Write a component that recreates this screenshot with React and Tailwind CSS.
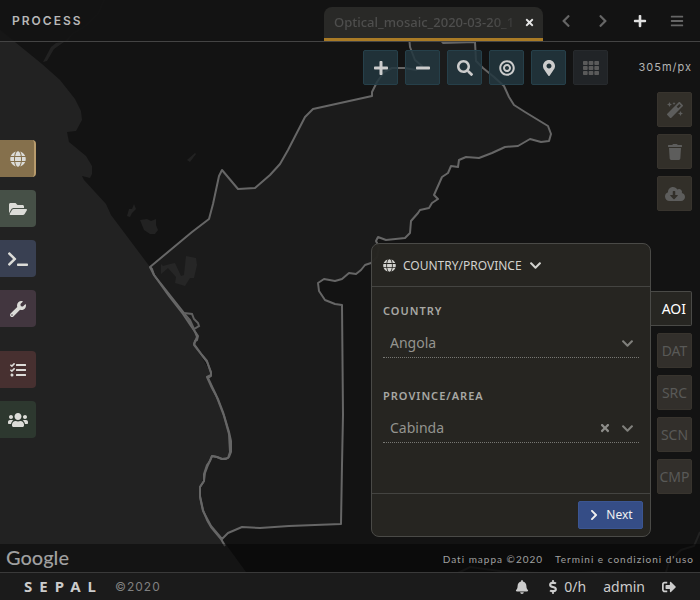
import React from "react";
import {
  FaBars, FaBell, FaBullseye, FaChevronDown, FaChevronLeft, FaChevronRight,
  FaCloudDownloadAlt, FaDollarSign, FaFolderOpen, FaGlobe, FaMagic,
  FaMapMarkerAlt, FaMinus, FaPlus, FaSearch, FaSignOutAlt, FaTasks,
  FaTerminal, FaTh, FaTimes, FaTrash, FaUsers, FaWrench,
} from "react-icons/fa";

const PROVINCE =
  "M409 36 L410 47 L415 60 L422 66 L416 70 L405 68 L392 68 L384 72 L377 82 L372 92 L372 96 L313 109 L305 117 L288 150 L280 164 L270 175 L255 188 L238 189 L222 170 L219 176 L213 204 L209 219 L192 232 L150 267 L154 275 L188 318 L195 332 L197 337 L194 344 L202 355 L207 361 L211 373 L211 376 L208 378 L216 395 L224 416 L229 434 L230 452 L228 458 L222 459 L217 457 L212 456 L208 465 L205 473 L204 481 L200 487 L200 497 L203 511 L211 526 L222 539 L228 533 L242 527 L260 528 L289 526 L341 524 L342 465 L343 415 L342 305 L335 304 L325 300 L319 291 L318 283 L324 279 L335 281 L342 279 L349 273 L356 274 L361 270 L365 265 L371 263 L377 257 L379 247 L376 241 L378 237 L386 240 L405 238 L410 233 L411 221 L418 213 L420 210 L429 208 L432 203 L438 199 L434 195 L442 177 L448 173 L451 166 L458 167 L459 160 L466 157 L479 158 L492 153 L505 147 L518 146 L530 139 L541 142 L549 141 L551 134 L548 126 L525 112 L514 105 L509 97 L504 86 L494 77 L483 68 L476 61 L475 42 L443 43 L439 38";

const SHORELINE =
  "M150 267 L152 269 L154 275 L169 296 L183 314 L191 326 L196 333 L198 336 L197 340 L195 341 L194 345 L201 354 L207 362 L211 372 L211 375 L207 377 L212 388 L218 399 L223 412 L229 432 L231 441 L231 452 L229 457 L226 459 L222 459 L217 457 L212 456 L210 461 L207 465 L204 474 L204 481 L200 487 L200 496 L203 510 L207 520 L211 527 L221 539 L225 546";

const COAST =
  "M0 30 L15 42 L42 64 L60 80 L75 99 L81 111 L82 120 L76 131 L67 132 L69 142 L86 156 L92 166 L92 174 L90 178 L82 176 L84 180 L106 204 L111 215 L150 267 L188 318 L196 337 L194 344 L211 373 L208 378 L216 395 L229 434 L230 455 L222 459 L212 456 L200 487 L203 511 L222 539 L246 572 L246 900 L0 900 Z";

function MapCanvas() {
  return (
    <svg
      className="absolute inset-0 h-full w-full"
      viewBox="0 0 700 600"
      preserveAspectRatio="xMinYMin slice"
      aria-hidden="true"
    >
      <rect width="1400" height="1200" fill="#131313" />
      <path d={COAST} fill="#222222" />
      <path d={PROVINCE} fill="#1b1b1b" stroke="#666666" strokeWidth="2" strokeLinejoin="round" />
      <path d={SHORELINE} fill="none" stroke="#666666" strokeWidth="2" strokeLinejoin="round" />
      <path d="M184 313 L192 314 L194 319 L198 323 L199 326 L194 329 L190 320 L186 316" fill="none" stroke="#606060" strokeWidth="2" />
      <g fill="#222222">
        <path d="M140 220 L147 219 L151 221 L156 219 L156 225 L158 230 L155 234 L150 234 L144 230 Z" />
        <path d="M127 216 L129 209 L132 209 L134 204 L136 209 L132 213 L130 217 Z" />
        <path d="M187 160 L195 153 L196 154 L190 162 Z" />
        <path d="M43 62 L51 47 L56 43 L68 41 L72 34 L64 42 L54 49 L47 61 Z" />
      </g>
      <path
        d="M186 256 L196 258 L197 265 L194 278 L190 278 L185 286 L175 283 L176 277 L168 268 L161 274 L161 264 L163 266 L170 264 L175 263 L181 276 L184 275 Z"
        fill="#262626"
      />
      <path
        d="M456 574 L470 567 L500 571 L560 574 L600 572 L658 574 M666 572 L669 562 L681 550 L694 546 L700 532"
        fill="none"
        stroke="#222222"
        strokeWidth="2"
      />
      <path d="M72 34 L84 27 L98 14 L104 0" fill="none" stroke="#191919" strokeWidth="1" />
    </svg>
  );
}

const modules = [
  [
    { label: "Process", icon: FaGlobe, size: 16, style: "bg-[#85704c] border-r-2 border-[#b89b6c] pl-[2px]" },
    { label: "Browse", icon: FaFolderOpen, size: 18, style: "bg-[#465047]" },
    { label: "Terminal", icon: FaTerminal, size: 20, style: "bg-[#394052]" },
    { label: "Apps", icon: FaWrench, size: 16, style: "bg-[#42363f]" },
  ],
  [
    { label: "Tasks", icon: FaTasks, size: 16, style: "bg-[#473030]" },
    { label: "Users", icon: FaUsers, size: 20, style: "bg-[#2d382f]" },
  ],
];

const mapTools = [
  { label: "Zoom in", icon: FaPlus },
  { label: "Zoom out", icon: FaMinus },
  { label: "Search", icon: FaSearch },
  { label: "Fit bounds", icon: FaBullseye },
  { label: "Area of interest", icon: FaMapMarkerAlt },
];

const recipeTools = [
  { label: "Auto-select scenes", icon: FaMagic, size: 16 },
  { label: "Clear selected scenes", icon: FaTrash, size: 16 },
  { label: "Retrieve", icon: FaCloudDownloadAlt, size: 20 },
];

function ModuleMenu() {
  return (
    <nav className="flex w-9 flex-col gap-6 pt-[98px]">
      {modules.map((group, i) => (
        <div key={i} className="flex flex-col gap-[13px]">
          {group.map(({ label, icon: Icon, size, style }) => (
            <button
              key={label}
              aria-label={label}
              className={`flex h-[37px] w-9 items-center justify-center rounded-r text-[#dcdcd8] ${style}`}
            >
              <Icon size={size} />
            </button>
          ))}
        </div>
      ))}
    </nav>
  );
}

function Header() {
  return (
    <header className="flex h-[42px] shrink-0 items-end justify-between border-b border-[#444444] bg-[#141414]/85">
      <h1 className="self-center pl-3 font-[Inter,sans-serif] text-xs font-semibold tracking-[2px] text-[#b8b8b8]">
        PROCESS
      </h1>
      <div className="flex h-full items-end">
        <div className="flex h-[34px] w-[219px] items-center rounded-t-lg border-b-3 border-[#a97b26] bg-[#292927] pr-2 pl-[10px]">
          <span className="min-w-0 flex-1 text-[13px] font-medium whitespace-nowrap text-[#4e4e4d] [mask-image:linear-gradient(to_right,black_85%,transparent_110%)]">
            Optical_mosaic_2020-03-20_1
          </span>
          <button aria-label="Close tab" className="ml-2 text-[#e6e6e6]">
            <FaTimes size={11} />
          </button>
        </div>
        <div className="flex h-full items-center gap-[23px] px-4 pr-4 text-[#666666]">
          <button aria-label="Previous tab"><FaChevronLeft size={14} /></button>
          <button aria-label="Next tab"><FaChevronRight size={14} /></button>
          <button aria-label="Add tab" className="text-[#e0e0e0]"><FaPlus size={14} /></button>
          <button aria-label="Tab menu"><FaBars size={14} /></button>
        </div>
      </div>
    </header>
  );
}

function MapToolbar() {
  return (
    <div className="flex items-center justify-end gap-[7px] pt-2">
      {mapTools.map(({ label, icon: Icon }) => (
        <button
          key={label}
          aria-label={label}
          className="flex h-[35px] w-[35px] items-center justify-center rounded-xs border border-[#26404a] bg-[#23373f]/85 text-[#cccccc]"
        >
          <Icon size={16} />
        </button>
      ))}
      <button
        aria-label="Grid"
        disabled
        className="flex h-[35px] w-[35px] items-center justify-center rounded-xs border border-[#272a2d] bg-[#212427] text-[#5a5a5a]"
      >
        <FaTh size={16} />
      </button>
      <span className="w-[77px] text-right font-[Inter,sans-serif] text-[11px] tracking-[1px] text-[#b4b4b4]">
        305m/px
      </span>
    </div>
  );
}

function Field({ id, label, value, clearable }) {
  return (
    <div className="flex flex-col">
      <label htmlFor={id} className="text-[11px] leading-4 font-semibold tracking-[1px] text-[#a8a8a4]">
        {label}
      </label>
      <div className="mt-2 flex h-[31px] items-center border-b border-dotted border-[#777773] pt-[2px] pr-[5px] pl-[7px] text-[#94948f]">
        <select
          id={id}
          defaultValue={value}
          className="min-w-0 flex-1 appearance-none bg-transparent text-sm outline-none"
        >
          <option>{value}</option>
        </select>
        {clearable && (
          <button aria-label="Clear" className="mr-[10px] text-[#8c8c88]">
            <FaTimes size={12} />
          </button>
        )}
        <FaChevronDown size={13} className="pointer-events-none text-[#80807c]" />
      </div>
    </div>
  );
}

function AoiPanel() {
  return (
    <form
      onSubmit={(e) => e.preventDefault()}
      className="mb-[7px] flex min-h-[294px] w-[280px] flex-col self-end rounded-lg border border-[#4a4a47] bg-[#272622]/98"
    >
      <button
        type="button"
        className="flex h-[43px] items-center gap-[7px] border-b border-[#444441] px-[11px] pt-px text-xs text-[#d2d2ce]"
      >
        <FaGlobe size={13} />
        COUNTRY/PROVINCE
        <FaChevronDown size={13} />
      </button>
      <div className="flex flex-1 flex-col gap-[30px] px-[11px] pt-4">
        <Field id="country" label="COUNTRY" value="Angola" />
        <Field id="province" label="PROVINCE/AREA" value="Cabinda" clearable />
      </div>
      <div className="flex justify-end border-t border-[#444441] p-[7px]">
        <button
          type="submit"
          className="flex h-7 w-[65px] items-center justify-center gap-[6px] rounded-xs border border-[#3b5591] bg-[#354d86] text-xs text-[#f0f0f0]"
        >
          <FaChevronRight size={12} />
          Next
        </button>
      </div>
    </form>
  );
}

function RecipeBar() {
  return (
    <div className="flex w-[41px] flex-col items-end justify-between pb-[50px]">
      <div className="flex flex-col gap-[7px]">
        {recipeTools.map(({ label, icon: Icon, size }) => (
          <button
            key={label}
            aria-label={label}
            disabled
            className="flex h-[35px] w-[35px] items-center justify-center rounded-xs border border-[#38342e] bg-[#322f29] text-[#5d5d5c]"
          >
            <Icon size={size} />
          </button>
        ))}
      </div>
      <div className="flex flex-col items-end gap-[7px]">
        <button className="flex h-[35px] w-[41px] items-center justify-end rounded-r-xs border border-l-0 border-[#4a4a47] bg-[#272622] pr-[5px] text-sm text-white">
          AOI
        </button>
        {["DAT", "SRC", "SCN", "CMP"].map((name) => (
          <button
            key={name}
            disabled
            className="flex h-[35px] w-[35px] items-center justify-center rounded-xs border border-[#38342e] bg-[#322f2b] text-sm text-[#595957]"
          >
            {name}
          </button>
        ))}
      </div>
    </div>
  );
}

function Attribution() {
  return (
    <div className="flex h-7 shrink-0 items-center justify-between bg-black/40 px-[6px]">
      <span className="pb-[2px] font-[Lato,sans-serif] text-xl leading-6 font-medium text-[#a0a0a0]">Google</span>
      <div className="flex gap-3 pt-[2px] font-[Lato,sans-serif] text-[10px] tracking-[1px] text-[#a0a0a0]">
        <span>Dati mappa ©2020</span>
        <a href="#terms">Termini e condizioni d'uso</a>
      </div>
    </div>
  );
}

function Footer() {
  return (
    <footer className="relative flex h-7 shrink-0 items-center justify-between border-t border-[#3a3a3a] bg-[#1b1b1b] px-6 text-[#cccccc]">
      <div className="flex items-center gap-3">
        <span className="text-[15px] font-bold tracking-[7px]">SEPAL</span>
        <span className="font-[Inter,sans-serif] text-xs tracking-[1px] text-[#808080]">©2020</span>
      </div>
      <div className="flex items-center gap-[17px] text-sm">
        <button aria-label="Notifications"><FaBell size={14} /></button>
        <button className="flex items-center gap-1">
          <FaDollarSign size={14} />
          0/h
        </button>
        <button>admin</button>
        <button aria-label="Log out"><FaSignOutAlt size={14} /></button>
      </div>
    </footer>
  );
}

export default function App() {
  return (
    <div className="relative flex min-h-screen flex-col bg-[#131313] font-['Noto_Sans',sans-serif]">
      <MapCanvas />
      <div className="relative flex flex-1 flex-col">
        <Header />
        <main className="flex flex-1">
          <ModuleMenu />
          <div className="flex flex-1 flex-col pr-2">
            <MapToolbar />
            <div className="flex flex-1 justify-end pt-[7px]">
              <AoiPanel />
              <RecipeBar />
            </div>
          </div>
        </main>
        <Attribution />
      </div>
      <Footer />
    </div>
  );
}
